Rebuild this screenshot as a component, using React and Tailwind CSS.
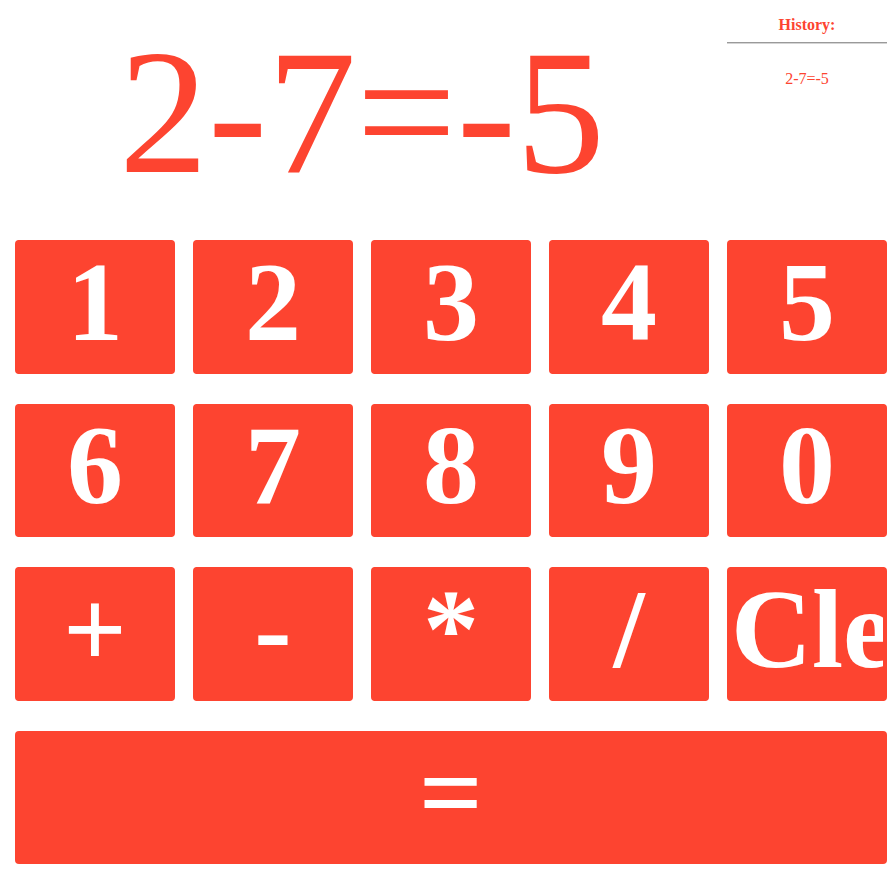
const keys = ["1", "2", "3", "4", "5", "6", "7", "8", "9", "0", "+", "-", "*", "/", "Clear"];

export default function App() {
  return (
    <div className="min-h-[879px] bg-white pl-[15px] pr-[9px] font-['Liberation_Serif',serif] text-[#fd4430]">
      <div className="grid h-[240px] grid-cols-5 gap-x-[18px]">
        <div className="col-span-4 pt-[23px] text-center text-[178px] leading-none">2-7=-5</div>
        <div className="flex flex-col items-center pt-[16px]">
          <p className="text-base font-bold leading-[18px]">History:</p>
          <div className="mt-[8px] h-[2px] w-full border-t border-[#9a9a9a] bg-[#d4d4d4]" />
          <p className="mt-[26px] text-base leading-[18px]">2-7=-5</p>
        </div>
      </div>
      <div className="grid grid-cols-5 grid-rows-[133.5px_133.5px_133.5px_133.5px] gap-x-[18px] gap-y-[30px]">
        {keys.map((k) => (
          <button
            key={k}
            className="flex items-center justify-start overflow-hidden whitespace-nowrap rounded border-x-4 border-[#fd4430] bg-[#fd4430] pb-[10px] text-[112px] font-bold leading-none text-white"
          >
            <span className={k === "Clear" ? "" : "w-full text-center"}>{k}</span>
          </button>
        ))}
        <button className="col-span-5 flex items-center justify-center rounded bg-[#fd4430] pb-[10px] text-[112px] font-bold leading-none text-white">
          =
        </button>
      </div>
    </div>
  );
}
